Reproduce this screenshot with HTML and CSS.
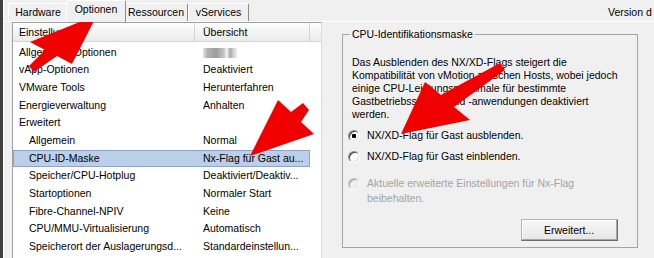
FILE: index.html
```html
<!DOCTYPE html>
<html lang="de">
<head>
  <meta charset="UTF-8">
  <title>Einstellungen der virtuellen Maschine</title>
  <link rel="stylesheet" href="styles.css">
</head>
<body>
  <div class="window">
    <div class="frame-edge"></div>

    <div class="main">
      <!-- Tab strip -->
      <div class="tabstrip">
        <span class="tab tab-hw">Hardware</span>
        <span class="tab tab-opt active">Optionen</span>
        <span class="tab tab-res">Ressourcen</span>
        <span class="tab tab-vs">vServices</span>
        <span class="version">Version d</span>
      </div>

      <div class="page">
        <!-- Settings list -->
        <div class="listview">
          <div class="lv-head">
            <div class="col c1">Einstellungen</div>
            <div class="col c2">Übersicht</div>
            <div class="col filler"></div>
          </div>
          <div class="lv-body">
            <div class="row"><div class="c1">Allgemeine Optionen</div><div class="c2"><span class="blur"></span></div></div>
            <div class="row"><div class="c1">vApp-Optionen</div><div class="c2">Deaktiviert</div></div>
            <div class="row"><div class="c1">VMware Tools</div><div class="c2">Herunterfahren</div></div>
            <div class="row"><div class="c1">Energieverwaltung</div><div class="c2">Anhalten</div></div>
            <div class="row"><div class="c1">Erweitert</div><div class="c2"></div></div>
            <div class="row sub"><div class="c1">Allgemein</div><div class="c2">Normal</div></div>
            <div class="row sub selected"><div class="c1">CPU-ID-Maske</div><div class="c2">Nx-Flag für Gast au...</div></div>
            <div class="row sub"><div class="c1">Speicher/CPU-Hotplug</div><div class="c2">Deaktiviert/Deaktiv...</div></div>
            <div class="row sub"><div class="c1">Startoptionen</div><div class="c2">Normaler Start</div></div>
            <div class="row sub"><div class="c1">Fibre-Channel-NPIV</div><div class="c2">Keine</div></div>
            <div class="row sub"><div class="c1">CPU/MMU-Virtualisierung</div><div class="c2">Automatisch</div></div>
            <div class="row sub"><div class="c1">Speicherort der Auslagerungsd...</div><div class="c2">Standardeinstellun...</div></div>
          </div>
        </div>

        <!-- Properties of the selected setting -->
        <div class="props">
          <fieldset class="group">
            <legend>CPU-Identifikationsmaske</legend>
            <p class="desc">
              Das Ausblenden des NX/XD-Flags steigert die<br>
              Kompatibilität von vMotion zwischen Hosts, wobei jedoch<br>
              einige CPU-Leistungsmerkmale für bestimmte<br>
              Gastbetriebssystem und -anwendungen deaktiviert<br>
              werden.
            </p>
            <div class="radio r1"><span class="dot checked"></span><span>NX/XD-Flag für Gast ausblenden.</span></div>
            <div class="radio r2"><span class="dot"></span><span>NX/XD-Flag für Gast einblenden.</span></div>
            <div class="radio r3 disabled"><span class="dot"></span><span>Aktuelle erweiterte Einstellungen für Nx-Flag<br>beibehalten.</span></div>
            <div class="btn-row"><button class="btn">Erweitert...</button></div>
          </fieldset>
        </div>
      </div>
    </div>

    <!-- red annotation arrows -->
    <svg class="arrows" width="654" height="258" viewBox="0 0 654 258">
      <polygon points="97,15 72,64 57,56 34,72 29,66 45,50 30,42" />
      <polygon points="250,156 278,100 291,112 303,103 309,110 301,122 314,134" />
      <polygon points="401,134 425,82 441,95 500,63 505,70 454,107 470,120" />
    </svg>
  </div>
</body>
</html>
```

FILE: styles.css
```css
body {
  margin: 0;
  font-family: "Liberation Sans", Arial, sans-serif;
  font-size: 10.5px;
  color: #000;
  background-color: #f0f0f0;
}

.window {
  position: relative;
  display: flex;
  width: 654px;
  height: 258px;
  overflow: hidden;
}

.frame-edge {
  flex: none;
  width: 3px;
  background-color: #404040;
  border-right: 1px solid #fff;
}

.main {
  flex: 1;
  display: flex;
  flex-direction: column;
  min-width: 0;
}

/* Tabs */
.tabstrip {
  flex: none;
  display: flex;
  align-items: flex-end;
  height: 21px;
  padding-left: 4px;
}

.tab {
  flex: none;
  box-sizing: border-box;
  height: 18px;
  line-height: 16px;
  text-align: center;
  border: 1px solid;
  border-color: #fff #8c8c8c transparent #fff;
  border-bottom: none;
  border-radius: 2px 2px 0 0;
}

.tab-hw { width: 60px; }
.tab-opt { width: 56px; }
.tab-res { width: 64px; }
.tab-vs { width: 61px; }

.tab.active {
  position: relative;
  z-index: 1;
  width: 60px;
  height: 22px;
  margin: 0 -2px -1px;
  padding-bottom: 4px;
  background-color: #f0f0f0;
}

.version {
  flex: none;
  align-self: center;
  margin-left: 359px;
  padding-top: 3px;
  white-space: nowrap;
}

/* Tab page */
.page {
  flex: 1;
  display: flex;
  padding-left: 8px;
  border-top: 1px solid #fff;
  min-height: 0;
}

.listview {
  flex: none;
  width: 310px;
  box-sizing: border-box;
  background-color: #fff;
  border: 1px solid #a0a0a0;
  border-right-color: #dcdcdc;
  border-bottom: none;
}

.lv-head {
  display: flex;
  height: 18px;
  background: linear-gradient(#ffffff, #f4f4f4 50%, #eaeaea);
  border-bottom: 1px solid #d5d5d5;
}

.lv-head .col {
  box-sizing: border-box;
  line-height: 18px;
  border-right: 1px solid #d5d5d5;
  white-space: nowrap;
}

.c1 { width: 182px; padding-left: 6px; }
.c2 { width: 115px; padding-left: 8px; }
.lv-head .filler { flex: 1; border-right: none; }

.lv-body {
  padding-top: 1.5px;
}

.row {
  display: flex;
  width: 297px;
  height: 17.7px;
  line-height: 17.7px;
}

.row .c1,
.row .c2 {
  box-sizing: border-box;
  overflow: hidden;
  white-space: nowrap;
}

.row.sub .c1 { padding-left: 16px; }

.row.selected {
  background-color: #bccfe9;
  box-shadow: inset 0 0 0 1px #86a5d4;
}

.blur {
  display: inline-block;
  width: 34px;
  height: 10px;
  vertical-align: middle;
  background: linear-gradient(90deg, #e6e6e6 0, #b4b4b4 12%, #9c9c9c 40%, #c6c6c6 62%, #f6f6f6 70%, #a8a8a8 80%, #d4d4d4 90%, #efefef 100%);
  filter: blur(0.6px);
}

/* Right side */
.props {
  flex: 1;
  padding: 5.5px 0 0 20px;
}

.group {
  box-sizing: border-box;
  width: 295px;
  height: 220px;
  margin: 0;
  padding: 0 19px 0 5px;
  border: 1px solid #a5a5a5;
}

.group legend {
  margin-left: 2px;
  padding: 0 2px;
  line-height: 13px;
}

.desc {
  margin: 15px 0 0 4px;
  line-height: 13px;
  white-space: nowrap;
}

.radio {
  display: flex;
  align-items: flex-start;
  line-height: 13px;
  white-space: nowrap;
}

.r1 { margin-top: 8px; }
.r2 { margin-top: 8px; }
.r3 { margin-top: 13px; line-height: 15.6px; }

.dot {
  flex: none;
  box-sizing: border-box;
  width: 12px;
  height: 12px;
  margin: 1px 7px 0 0;
  border-radius: 50%;
  background-color: #fff;
  border: 1px solid;
  border-color: #8a8a8a #fff #fff #8a8a8a;
  box-shadow: inset 1px 1px 0 #404040, inset -1px -1px 0 #dcdcdc;
}

.r3 .dot { margin-top: 2px; }

.dot.checked {
  background: radial-gradient(circle, #000 0, #000 2px, #fff 2.5px);
}

.disabled {
  color: #a3a3a3;
}

.disabled .dot {
  background-color: #f0f0f0;
  border-color: #c4c4c4 #fff #fff #c4c4c4;
  box-shadow: inset 1px 1px 0 #a0a0a0, inset -1px -1px 0 #e4e4e4;
}

.btn-row {
  display: flex;
  justify-content: flex-end;
  margin-top: 12px;
}

.btn {
  width: 97px;
  height: 22px;
  padding: 0;
  font: inherit;
  color: #000;
  background: linear-gradient(#f7f7f7, #e6e6e6);
  border: 1px solid #b4b4b4;
  border-right-color: #6e6e6e;
  border-bottom-color: #6e6e6e;
  box-shadow: inset -1px -1px 0 #a8a8a8, inset 1px 1px 0 #fff;
}

/* Annotation arrows */
.arrows {
  position: absolute;
  left: 0;
  top: 0;
  pointer-events: none;
  fill: #f00000;
}
```
